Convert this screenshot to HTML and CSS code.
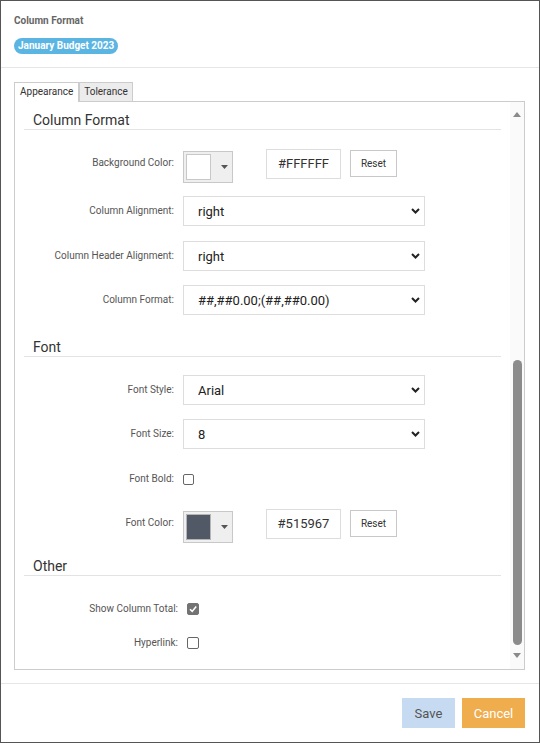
FILE: index.html
```html
<!DOCTYPE html>
<html>
<head>
<meta charset="utf-8">
<link rel="stylesheet" href="styles.css">
</head>
<body>
<div class="modal">
  <header class="modal-header">
    <div class="modal-title">Column Format</div>
    <span class="badge">January Budget 2023</span>
  </header>
  <main class="modal-body">
    <div class="tabs">
      <div class="tab tab-active">Appearance</div>
      <div class="tab">Tolerance</div>
    </div>
    <div class="panel">
      <div class="panel-content">
        <h3 class="section-title">Column Format</h3>

        <div class="form-row row-first">
          <div class="form-label label-tall">Background Color:</div>
          <div class="picker">
            <span class="swatch swatch-white"></span>
            <svg class="picker-arrow" width="7" height="4" viewBox="0 0 7 4"><path d="M0 0H7L3.5 4Z" fill="#555"/></svg>
          </div>
          <div class="hex">#FFFFFF</div>
          <div class="btn-reset">Reset</div>
        </div>

        <div class="form-row row-gap13">
          <div class="form-label">Column Alignment:</div>
          <div class="select"><span>right</span><svg width="9" height="6" viewBox="0 0 9 6"><path d="M1 1L4.5 4.5L8 1" fill="none" stroke="#222" stroke-width="2"/></svg></div>
        </div>

        <div class="form-row row-gap15">
          <div class="form-label">Column Header Alignment:</div>
          <div class="select"><span>right</span><svg width="9" height="6" viewBox="0 0 9 6"><path d="M1 1L4.5 4.5L8 1" fill="none" stroke="#222" stroke-width="2"/></svg></div>
        </div>

        <div class="form-row row-gap14">
          <div class="form-label">Column Format:</div>
          <div class="select"><span>##,##0.00;(##,##0.00)</span><svg width="9" height="6" viewBox="0 0 9 6"><path d="M1 1L4.5 4.5L8 1" fill="none" stroke="#222" stroke-width="2"/></svg></div>
        </div>

        <h3 class="section-title title-font">Font</h3>

        <div class="form-row row-gap18">
          <div class="form-label">Font Style:</div>
          <div class="select"><span>Arial</span><svg width="9" height="6" viewBox="0 0 9 6"><path d="M1 1L4.5 4.5L8 1" fill="none" stroke="#222" stroke-width="2"/></svg></div>
        </div>

        <div class="form-row row-gap14">
          <div class="form-label">Font Size:</div>
          <div class="select"><span>8</span><svg width="9" height="6" viewBox="0 0 9 6"><path d="M1 1L4.5 4.5L8 1" fill="none" stroke="#222" stroke-width="2"/></svg></div>
        </div>

        <div class="form-row row-gap15 row-center">
          <div class="form-label">Font Bold:</div>
          <span class="checkbox"></span>
        </div>

        <div class="form-row row-gap15">
          <div class="form-label label-tall">Font Color:</div>
          <div class="picker">
            <span class="swatch swatch-dark"></span>
            <svg class="picker-arrow" width="7" height="4" viewBox="0 0 7 4"><path d="M0 0H7L3.5 4Z" fill="#555"/></svg>
          </div>
          <div class="hex">#515967</div>
          <div class="btn-reset">Reset</div>
        </div>

        <h3 class="section-title title-other">Other</h3>

        <div class="form-row other-row other-first">
          <div class="form-label other-label">Show Column Total:</div>
          <span class="checkbox checkbox-lg checked"><svg width="10" height="10" viewBox="0 0 10 10"><path d="M2 5.2L4.2 7.4L8.2 2.6" fill="none" stroke="#fff" stroke-width="1.6"/></svg></span>
        </div>

        <div class="form-row other-row other-next">
          <div class="form-label other-label">Hyperlink:</div>
          <span class="checkbox checkbox-lg"></span>
        </div>
      </div>
      <div class="scrollbar">
        <svg width="8" height="5" viewBox="0 0 8 5"><path d="M0 5L4 0L8 5Z" fill="#8a8a8a"/></svg>
        <div class="thumb"></div>
        <svg class="arrow-down" width="8" height="5" viewBox="0 0 8 5"><path d="M0 0L8 0L4 5Z" fill="#8a8a8a"/></svg>
      </div>
    </div>
  </main>
  <footer class="modal-footer">
    <button class="btn btn-save">Save</button>
    <button class="btn btn-cancel">Cancel</button>
  </footer>
</div>
</body>
</html>
```
FILE: styles.css
```css
* { box-sizing: border-box; }

body {
  margin: 0;
  background: #fff;
  font-family: Roboto, "Liberation Sans", Arial, sans-serif;
}

.modal {
  width: 540px;
  height: 743px;
  border: 1px solid #555;
  background: #fff;
  display: flex;
  flex-direction: column;
}

.modal-header {
  display: flex;
  flex-direction: column;
  align-items: flex-start;
  padding: 13px 13px 13px;
  border-bottom: 1px solid #e6e6e6;
}

.modal-title {
  font-size: 10px;
  font-weight: 700;
  line-height: 14px;
  color: #666;
}

.badge {
  margin-top: 10px;
  height: 16px;
  line-height: 16px;
  padding: 0 4px;
  border-radius: 8px;
  background: #5bb5e3;
  color: #fff;
  font-size: 10px;
  font-weight: 700;
}

.modal-body {
  padding: 14px 14px 13px 13px;
  display: flex;
  flex-direction: column;
}

.tabs {
  display: flex;
}

.tab {
  height: 19px;
  padding: 0 4px;
  font-size: 10px;
  line-height: 18px;
  color: #333;
  background: #ececec;
  border: 1px solid #ccc;
  border-bottom: none;
}

.tab-active {
  background: #fff;
  height: 20px;
  margin-bottom: -1px;
  padding: 0 5px;
  position: relative;
  z-index: 1;
}

.panel {
  height: 569px;
  border: 1px solid #ccc;
  display: flex;
}

.panel-content {
  flex: 1;
  padding: 9px 9px 0 9px;
}

.section-title {
  margin: 0;
  padding-left: 9px;
  font-size: 14px;
  font-weight: 400;
  line-height: 18px;
  color: #333;
  border-bottom: 1px solid #e3e3e3;
}

.title-font { margin-top: 23px; }
.title-other { margin-top: 14px; }

.form-row {
  display: flex;
  align-items: flex-start;
}

.row-first { margin-top: 19px; }
.row-gap13 { margin-top: 13px; }
.row-gap14 { margin-top: 14px; }
.row-gap15 { margin-top: 15px; }
.row-gap18 { margin-top: 18px; }

.row-center {
  height: 30px;
  align-items: center;
}

.form-label {
  width: 159px;
  padding-right: 9px;
  text-align: right;
  font-size: 10px;
  line-height: 30px;
  color: #555;
  white-space: nowrap;
}

.label-tall { line-height: 28px; }

.picker {
  width: 50px;
  height: 32px;
  margin-top: 2px;
  border: 1px solid #c8c8c8;
  background: #efefef;
  display: flex;
  align-items: center;
  padding-left: 2px;
}

.swatch {
  width: 25px;
  height: 26px;
  border: 1px solid #c8c8c8;
}

.swatch-white { background: #fff; }
.swatch-dark { background: #515967; border-color: #b5b5b5; }

.picker-arrow { margin-left: 10px; }

.hex {
  width: 75px;
  height: 30px;
  margin-left: 33px;
  border: 1px solid #ddd;
  text-align: center;
  font-size: 13px;
  line-height: 28px;
  color: #333;
}

.btn-reset {
  width: 47px;
  height: 27px;
  margin-top: 1px;
  margin-left: 9px;
  border: 1px solid #c8c8c8;
  background: #fff;
  text-align: center;
  font-size: 10px;
  line-height: 25px;
  color: #333;
}

.select {
  width: 242px;
  height: 30px;
  border: 1px solid #ddd;
  background: #fff;
  display: flex;
  align-items: center;
  justify-content: space-between;
  padding: 0 4px 0 14px;
  font-size: 13px;
  color: #222;
}

.checkbox {
  width: 11px;
  height: 11px;
  border: 1px solid #666;
  border-radius: 2px;
  background: #fff;
  display: flex;
  align-items: center;
  justify-content: center;
}

.checkbox-lg {
  width: 12px;
  height: 12px;
}

.checkbox.checked {
  background: #737373;
  border-color: #737373;
}

.other-row {
  height: 24px;
  align-items: center;
}

.other-first { margin-top: 21px; }
.other-next { margin-top: 10px; }

.other-label {
  width: 163px;
  line-height: 24px;
}

.scrollbar {
  width: 14px;
  background: #fafafa;
  display: flex;
  flex-direction: column;
  align-items: center;
  padding-top: 10px;
}

.thumb {
  width: 9px;
  height: 285px;
  margin-top: 243px;
  border-radius: 4.5px;
  background: #8b8b8b;
}

.arrow-down { margin-top: 8px; }

.modal-footer {
  flex: 1;
  border-top: 1px solid #e6e6e6;
  padding: 14px 14px 0;
  display: flex;
  justify-content: flex-end;
  align-items: flex-start;
  gap: 7px;
}

.btn {
  height: 30px;
  padding: 0;
  border: none;
  font-family: Roboto, "Liberation Sans", Arial, sans-serif;
  font-size: 13px;
}

.btn-save {
  width: 53px;
  background: #c6dbf1;
  color: #555;
}

.btn-cancel {
  width: 63px;
  background: #f0ad4e;
  color: #fff;
}
```
